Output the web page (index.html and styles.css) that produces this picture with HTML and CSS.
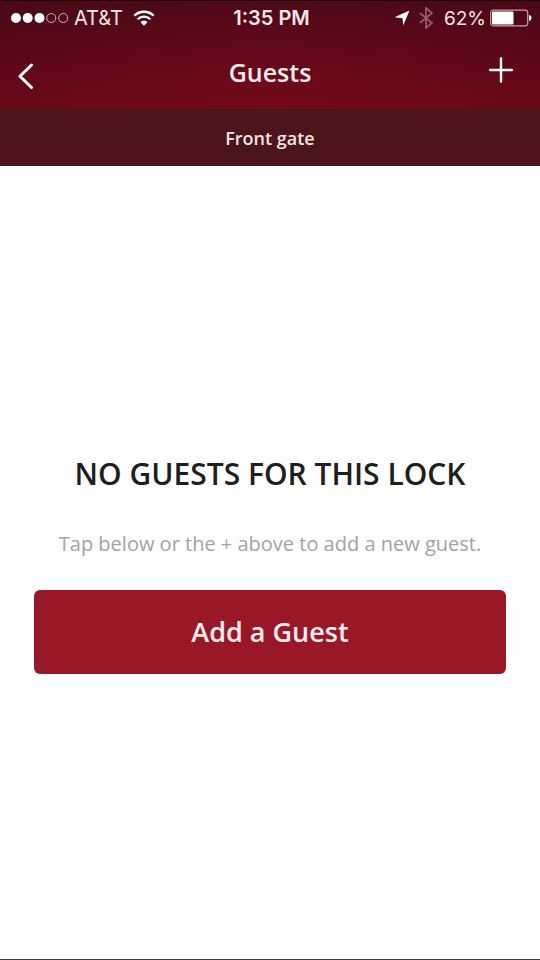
FILE: index.html
```html
<!DOCTYPE html>
<html lang="en">
<head>
<meta charset="utf-8">
<meta name="viewport" content="width=device-width, initial-scale=1">
<title>Guests</title>
<link rel="stylesheet" href="styles.css">
</head>
<body>
<div class="screen">
  <header class="top">
    <div class="status">
      <div class="status-left">
        <svg class="signal" width="58" height="12" viewBox="0 0 58 12" aria-hidden="true">
          <g fill="#fff"><circle cx="5" cy="6" r="5"/><circle cx="16.700" cy="6" r="5"/><circle cx="28.500" cy="6" r="5"/></g>
          <g fill="none" stroke="#d2b5ba" stroke-width="1"><circle cx="40.300" cy="6" r="4.500"/><circle cx="52.200" cy="6" r="4.500"/></g>
        </svg>
        <span class="carrier">AT&amp;T</span>
        <svg class="wifi" width="22" height="16" viewBox="0 0 22 16" aria-hidden="true">
          <g fill="none" stroke="#fff" stroke-width="2.300"><path d="M1.300 5.800C6.500.4 15.500.4 20.700 5.800"/><path d="M4.700 9.200c3.400-3.400 9.200-3.400 12.600 0"/></g>
          <path fill="#fff" d="M7.500 12.200c1.900-1.900 5.100-1.900 7 0L11 15.700z"/>
        </svg>
      </div>
      <span class="time">1:35 PM</span>
      <div class="status-right">
        <svg width="16" height="16" viewBox="0 0 16 16" aria-hidden="true"><path fill="#fff" d="M15.500.5 9.200 15.500 8.500 8.200.5 7.200z"/></svg>
        <svg class="bluetooth" width="14" height="22" viewBox="0 0 14 22" aria-hidden="true"><path fill="none" stroke="#965c67" stroke-width="1.800" d="m1 6 12 10-6 5V1l6 5L1 16"/></svg>
        <span class="percent">62%</span>
        <svg class="battery" width="42" height="18" viewBox="0 0 42 18" aria-hidden="true">
          <rect x=".7" y="1.200" width="37" height="15.600" rx="2.500" fill="none" stroke="#c79fa6" stroke-width="1.200"/>
          <rect x="2" y="2.500" width="21.500" height="13" rx="1" fill="#fff"/>
          <path fill="#fff" d="M39 6c3.300.5 3.300 5.500 0 6z"/>
        </svg>
      </div>
    </div>
    <nav class="nav">
      <button class="icon-button" type="button" aria-label="Back">
        <svg width="16" height="26" viewBox="0 0 16 26" aria-hidden="true"><path fill="none" stroke="#fff" stroke-width="3" stroke-linecap="round" stroke-linejoin="round" d="M13.500 2 2 13.300 13.500 24.500"/></svg>
      </button>
      <h1 class="title">Guests</h1>
      <button class="icon-button add" type="button" aria-label="Add guest">
        <svg width="24" height="26" viewBox="0 0 24 26" aria-hidden="true"><path fill="none" stroke="#fff" stroke-width="2.400" stroke-linecap="round" d="M1.200 13h21.600M12 1.500v23"/></svg>
      </button>
    </nav>
  </header>
  <div class="lock-name">Front gate</div>
  <main class="empty">
    <h2 class="heading">NO GUESTS FOR THIS LOCK</h2>
    <p class="hint">Tap below or the + above to add a new guest.</p>
    <button class="primary" type="button">Add a Guest</button>
  </main>
</div>
</body>
</html>
```
FILE: styles.css
```css
* {
  box-sizing: border-box;
}

body {
  margin: 0;
  background: #fefefe;
  font-family: "Open Sans", sans-serif;
}

.screen {
  display: flex;
  flex-direction: column;
  min-height: 100vh;
  border-bottom: 1px solid #3c3c40;
}

.top {
  border-top: 1px solid #1c0307;
  background:
    radial-gradient(ellipse 70% 110% at 50% 100%, rgba(125, 11, 30, 0.6), rgba(125, 11, 30, 0)),
    linear-gradient(#4a0916, #640818);
  color: #fff;
}

.status {
  display: grid;
  grid-template-columns: 1fr auto 1fr;
  align-items: center;
  height: 34px;
  padding: 0 8px 0 11px;
  font-family: Inter, "Liberation Sans", sans-serif;
  font-size: 20px;
  color: #f6e8ea;
}

.status-left,
.status-right {
  display: flex;
  align-items: center;
}

.status-right {
  justify-content: flex-end;
}

.carrier {
  margin: 0 10px 0 5px;
}

.time {
  font-weight: 600;
}

.percent {
  font-size: 19px;
}

.bluetooth {
  margin: 0 11px 0 9px;
}

.battery {
  margin-left: 4px;
}

.nav {
  display: grid;
  grid-template-columns: 1fr auto 1fr;
  align-items: center;
  height: 74px;
  padding: 0 16px;
}

.icon-button {
  display: flex;
  justify-self: start;
  padding: 8px 2px 0;
  border: 0;
  background: none;
}

.add {
  justify-self: end;
  padding: 0 11px 4px;
}

.title {
  margin: 0;
  font-size: 25px;
  font-weight: 600;
  line-height: 36px;
  color: #faecee;
}

.lock-name {
  padding: 17px 16px 15px;
  background: #4b1519;
  color: #f3e4e4;
  font-size: 18px;
  font-weight: 600;
  line-height: 25px;
  text-align: center;
}

.empty {
  display: flex;
  flex: 1;
  flex-direction: column;
  justify-content: center;
  padding: 0 34px;
  text-align: center;
}

.heading {
  margin: 0 0 32px;
  color: #1e1e20;
  font-size: 30px;
  font-weight: 600;
  line-height: 44px;
}

.hint {
  margin: 0 0 30px;
  color: #a3a3a3;
  font-size: 20px;
  line-height: 32px;
}

.primary {
  height: 84px;
  border: 0;
  border-radius: 6px;
  background: #991828;
  color: #fdecee;
  font: inherit;
  font-size: 27px;
  font-weight: 600;
}
```
